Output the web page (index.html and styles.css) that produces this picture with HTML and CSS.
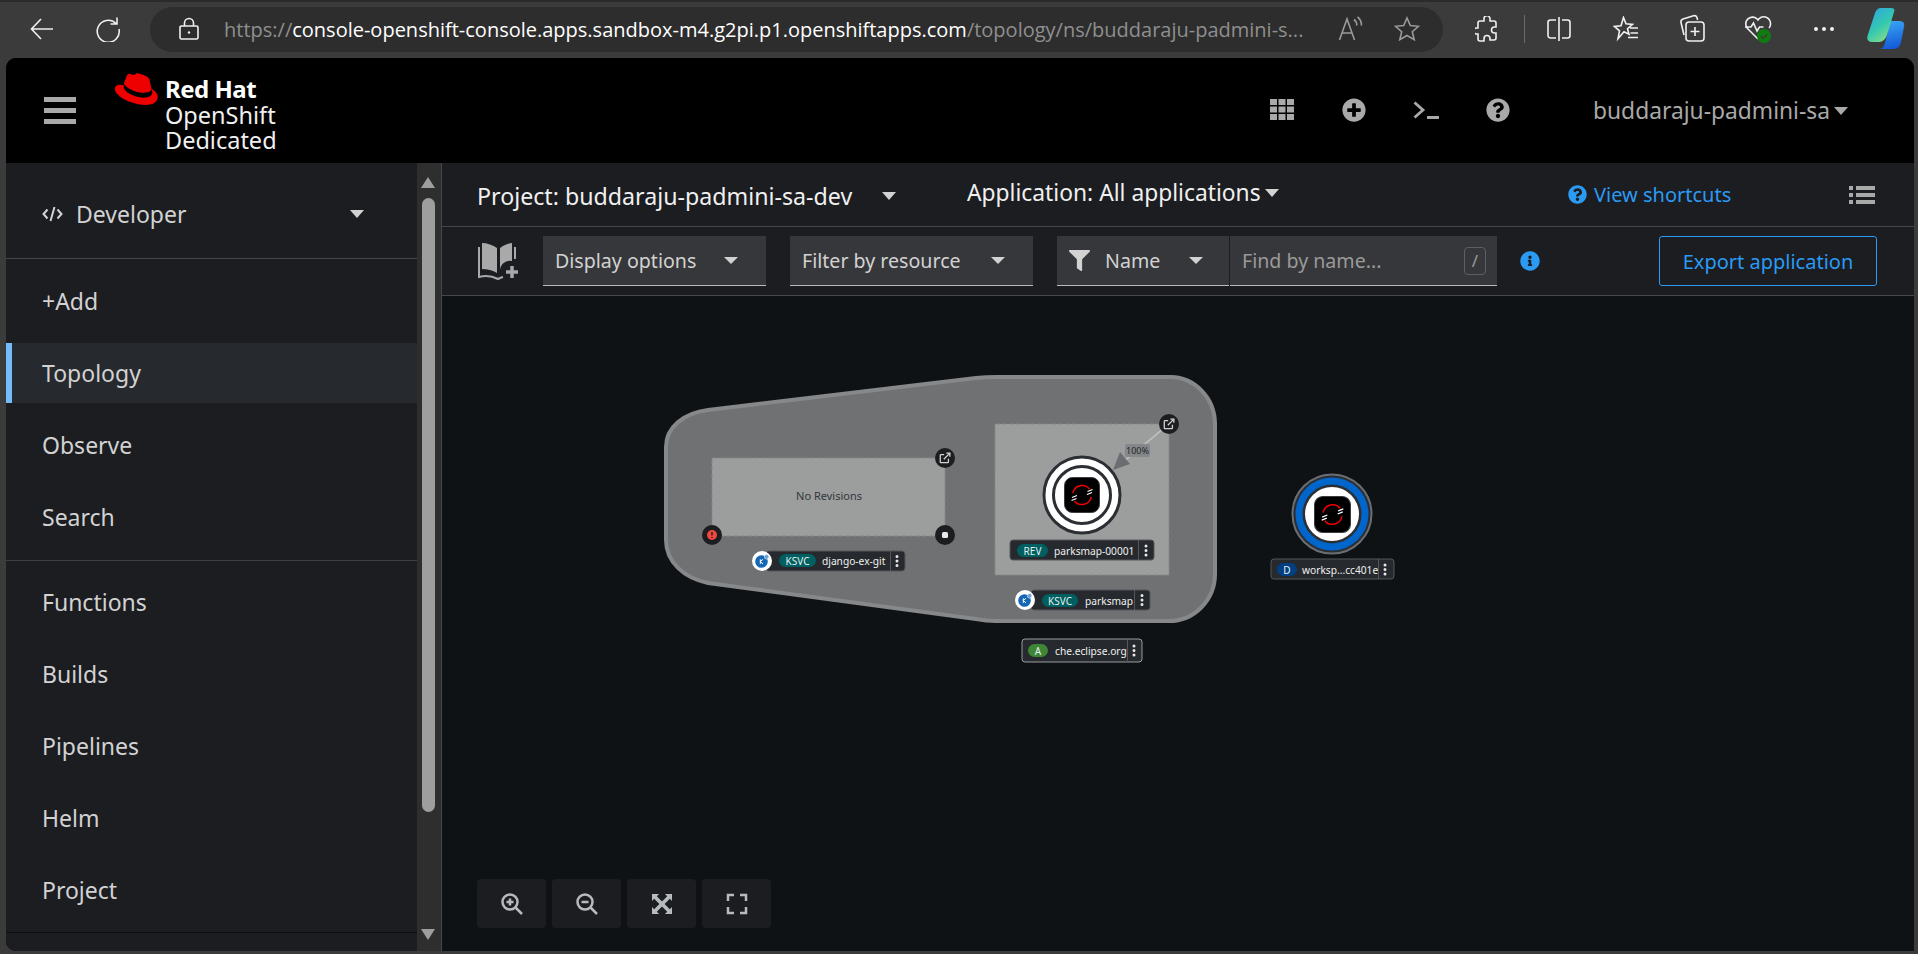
FILE: index.html
```html
<!DOCTYPE html>
<html lang="en">
<head>
  <meta charset="UTF-8">
  <title>Topology - Red Hat OpenShift Dedicated</title>
  <link rel="stylesheet" href="styles.css">
</head>
<body>

  <svg class="defs" width="0" height="0">
    <defs>
      <symbol id="i-question" viewBox="0 0 512 512"><path d="M504 256c0 136.997-111.043 248-248 248S8 392.997 8 256C8 119.083 119.043 8 256 8s248 111.083 248 248zM262.655 90c-54.497 0-89.255 22.957-116.549 63.758-3.536 5.286-2.353 12.415 2.715 16.258l34.699 26.31c5.205 3.947 12.621 3.008 16.665-2.122 17.864-22.658 30.113-35.797 57.303-35.797 20.429 0 45.698 13.148 45.698 32.958 0 14.976-12.363 22.667-32.534 33.976C247.128 238.528 216 254.941 216 296v4c0 6.627 5.373 12 12 12h56c6.627 0 12-5.373 12-12v-1.333c0-28.462 83.186-29.647 83.186-106.667 0-58.002-60.165-102-116.531-102zM256 338c-25.365 0-46 20.635-46 46 0 25.364 20.635 46 46 46s46-20.636 46-46c0-25.365-20.635-46-46-46z"/></symbol>
      <symbol id="i-info" viewBox="0 0 512 512"><path d="M256 8C119.043 8 8 119.083 8 256c0 136.997 111.043 248 248 248s248-111.003 248-248C504 119.083 392.957 8 256 8zm0 110c23.196 0 42 18.804 42 42s-18.804 42-42 42-42-18.804-42-42 18.804-42 42-42zm56 254c0 6.627-5.373 12-12 12h-88c-6.627 0-12-5.373-12-12v-24c0-6.627 5.373-12 12-12h12v-64h-12c-6.627 0-12-5.373-12-12v-24c0-6.627 5.373-12 12-12h64c6.627 0 12 5.373 12 12v100h12c6.627 0 12 5.373 12 12v24z"/></symbol>
      <symbol id="i-plus" viewBox="0 0 512 512"><path d="M256 8C119 8 8 119 8 256s111 248 248 248 248-111 248-248S393 8 256 8zm144 276c0 6.6-5.4 12-12 12h-92v92c0 6.6-5.4 12-12 12h-56c-6.6 0-12-5.4-12-12v-92h-92c-6.6 0-12-5.4-12-12v-56c0-6.6 5.4-12 12-12h92v-92c0-6.6 5.4-12 12-12h56c6.6 0 12 5.4 12 12v92h92c6.6 0 12 5.4 12 12v56z"/></symbol>
      <symbol id="i-filter" viewBox="0 0 512 512"><path d="M487.976 0H24.028C2.71 0-8.047 25.866 7.058 40.971L192 225.941V432c0 7.831 3.821 15.17 10.237 19.662l80 55.98C298.02 518.69 320 507.493 320 487.98V225.941l184.947-184.97C520.021 25.896 509.338 0 487.976 0z"/></symbol>
      <symbol id="i-ext" viewBox="0 0 14 14"><path class="ext-line" d="M11 8v3.600a.9.9 0 0 1-.9.9H2.400a.9.9 0 0 1-.9-.9V3.900a.9.9 0 0 1 .9-.9H6M5.600 8.400 12.400 1.600M8.600 1.300h4.100v4.100"/></symbol>
      <symbol id="i-os" viewBox="0 0 36 36">
        <rect class="os-box" x="0.500" y="0.500" width="35" height="35" rx="8"/>
        <path class="os-arc" d="M8.800 16.200A9.500 9.500 0 0 1 25.500 12M27.200 19.800A9.500 9.500 0 0 1 10.500 24"/>
        <path class="os-dash" d="M8 20.500l5-2M7.500 23.500l5-2M23.500 14.500l5-2M23 17.500l5-2"/>
      </symbol>
      <symbol id="i-kn" viewBox="0 0 20 20">
        <circle class="kn-bg" cx="10" cy="10" r="10"/>
        <circle class="kn-blue" cx="9.500" cy="10.500" r="6.300"/>
        <circle class="kn-small" cx="14.600" cy="5.800" r="2.300"/>
        <path class="kn-k" d="M8.300 8.300v4.600M11 8.300l-2.700 2.200 2.700 2.400"/>
      </symbol>
    </defs>
  </svg>

  <div class="browser-bar">
    <svg class="nav-back" width="24" height="24" viewBox="0 0 24 24"><path class="chrome-line" d="M23 12H1.500M11 2 1.500 12 11 22"/></svg>
    <svg class="nav-reload" width="26" height="26" viewBox="0 0 26 26"><path class="chrome-line" d="M21 7.500A11 11 0 1 0 24 13M22 1.500v6.500h-6.500"/></svg>
    <div class="address-pill">
      <svg class="lock" width="20" height="24" viewBox="0 0 20 24"><path class="chrome-line" d="M2.500 9h15a1.500 1.500 0 0 1 1.500 1.500v10a1.500 1.500 0 0 1-1.500 1.500h-15A1.500 1.500 0 0 1 1 20.500v-10A1.500 1.500 0 0 1 2.500 9zM5.500 9V6a4.500 4.500 0 0 1 9 0v3"/><circle class="chrome-dot" cx="10" cy="15.500" r="1.200"/></svg>
      <div class="url"><span class="url-dim">https://</span>console-openshift-console.apps.sandbox-m4.g2pi.p1.openshiftapps.com<span class="url-dim">/topology/ns/buddaraju-padmini-s...</span></div>
      <svg class="read-aloud" width="26" height="26" viewBox="0 0 26 26"><path class="chrome-dim" d="M1.500 24 9 3l7.500 21M4 17h10M16 3.500c2 1.500 2.800 3.500 2.800 6M19.500 1c3 2.200 4 5 4 8.500"/></svg>
      <svg class="pill-star" width="26" height="26" viewBox="0 0 26 26"><path class="chrome-dim" d="M13 2l3.300 7.500 8.200.8-6.200 5.400 1.900 8L13 19.500l-7.200 4.200 1.900-8-6.200-5.400 8.200-.8z"/></svg>
    </div>
    <div class="tool-cell tool-ext">
      <svg width="24" height="26" viewBox="0 0 24 26"><path class="chrome-line" d="M9 2.500a3 3 0 0 1 6 .6V5h4a2 2 0 0 1 2 2v4h-1.500a3 3 0 0 0 0 6H21v5a2 2 0 0 1-2 2h-4v-1.500a3 3 0 0 0-6 0V25H5a2 2 0 0 1-2-2v-5H1.500a3 3 0 0 1 0-6H3V7a2 2 0 0 1 2-2h4z"/></svg>
    </div>
    <div class="tool-sep"></div>
    <div class="tool-cell tool-split">
      <svg width="24" height="26" viewBox="0 0 24 26"><path class="chrome-line" d="M9 4H3.500A2.500 2.500 0 0 0 1 6.500v13A2.500 2.500 0 0 0 3.500 22H9M15 4h5.500A2.500 2.500 0 0 1 23 6.500v13a2.500 2.500 0 0 1-2.500 2.500H15M12 1v24"/></svg>
    </div>
    <div class="tool-cell">
      <svg width="26" height="26" viewBox="0 0 26 26"><path class="chrome-line" d="M10.500 1.500l2.500 6.300 6.500.6-5 4.300 1.500 5.500-5-2.500-6 7 1.500-7.800-5-4.500 6.500-.6zM17 12h8M17.500 17h7.500M15 21.500h10"/></svg>
    </div>
    <div class="tool-cell">
      <svg width="26" height="30" viewBox="0 0 26 30"><path class="chrome-line" d="M5 21 2 8.500a3 3 0 0 1 2-3.500L14.500 1.800a3 3 0 0 1 3.500 1.700l.6 2.500M10 8h12a3 3 0 0 1 3 3v13a3 3 0 0 1-3 3H10a3 3 0 0 1-3-3V11a3 3 0 0 1 3-3zM16 13v9M11.500 17.500h9"/></svg>
    </div>
    <div class="tool-cell">
      <svg width="28" height="30" viewBox="0 0 28 30">
        <path class="chrome-line" d="M14 25 3.500 14.500A6.800 6.800 0 0 1 13 4.800L14 6l1-1.200a6.800 6.800 0 0 1 10 9.200M1 13h6l2.500-4 3.500 8 2.500-4h4"/>
        <circle class="health-ok" cx="20" cy="22" r="7"/>
        <path class="health-check" d="M17 22l2.200 2.200 4-4"/>
      </svg>
    </div>
    <div class="tool-cell">
      <svg width="22" height="6" viewBox="0 0 22 6"><circle class="chrome-dot" cx="3" cy="3" r="2"/><circle class="chrome-dot" cx="11" cy="3" r="2"/><circle class="chrome-dot" cx="19" cy="3" r="2"/></svg>
    </div>
    <div class="tool-cell tool-copilot">
      <svg width="38" height="42" viewBox="0 0 38 42">
        <defs>
          <linearGradient id="cp-a" x1="0" y1="0" x2="0.6" y2="1"><stop offset="0" stop-color="#2aa3e8"/><stop offset="0.6" stop-color="#35c8b0"/><stop offset="1" stop-color="#7fdc8c"/></linearGradient>
          <linearGradient id="cp-b" x1="0.4" y1="0" x2="0.6" y2="1"><stop offset="0" stop-color="#39a5f2"/><stop offset="1" stop-color="#1357d8"/></linearGradient>
        </defs>
        <path fill="url(#cp-b)" d="M17 13h15c4 0 6 2 5 6l-3 15c-1 5-4 7-8 7H12c3 0 5-2 6-6l3-12c.7-3-1-5-4-5z"/>
        <path fill="url(#cp-a)" d="M14 0h10c3 0 4 1.500 3 4L20 27c-1.500 4-4 7-8 7H5c-4 0-5.500-3-4.500-6L8 5c1-3 3-5 6-5z"/>
      </svg>
    </div>
  </div>

  <div class="app">
    <header class="masthead">
      <div class="hamburger"><span></span><span></span><span></span></div>
      <svg class="rh-hat" width="45" height="34" viewBox="0 -2 50 37"><path d="M33.600 20.500c3.300 0 8-.7 8-4.600a3.800 3.800 0 0 0-.1-.9l-2-8.600c-.5-1.900-.9-2.800-4.200-4.400C32.800.7 27.200-1 25.500-1c-1.500 0-2 2-3.800 2-1.700 0-3-1.400-4.600-1.400-1.600 0-2.600 1-3.400 3.200 0 0-2.200 6.200-2.500 7.200a1.700 1.700 0 0 0-.1.500c0 2.400 9.600 10.400 22.500 10.400m8.600-3c.4 2.100.4 2.300.4 2.600 0 3.600-4 5.600-9.300 5.600-12 0-22.500-7-22.500-11.700a4.700 4.700 0 0 1 .4-1.900C6.400 11 1 11.800 1 16.600 1 24.500 19.600 34.200 34.400 34.200c11.300 0 14.200-5.100 14.200-9.200 0-3.200-2.800-6.800-7.800-9"/></svg>
      <div class="brand"><b class="brand-rh">Red Hat</b><br>OpenShift<br>Dedicated</div>
      <div class="head-tools">
        <div class="head-icon">
          <svg width="24" height="21" viewBox="0 0 24 21"><path d="M0 0h7v6H0zM8.500 0h7v6h-7zM17 0h7v6h-7zM0 7.500h7v6H0zM8.500 7.500h7v6h-7zM17 7.500h7v6h-7zM0 15h7v6H0zM8.500 15h7v6h-7zM17 15h7v6h-7z"/></svg>
        </div>
        <div class="head-icon"><svg width="24" height="24"><use href="#i-plus"/></svg></div>
        <div class="head-icon">
          <svg width="26" height="20" viewBox="0 0 26 20"><path class="term-line" d="M1.500 2.500 10 10l-8.500 7.500M14 17.500h12"/></svg>
        </div>
        <div class="head-icon"><svg width="24" height="24"><use href="#i-question"/></svg></div>
      </div>
      <div class="user-menu">buddaraju-padmini-sa<span class="caret caret-user"></span></div>
    </header>

    <div class="workspace">
      <aside class="sidebar">
        <div class="perspective">
          <svg class="code-icon" width="21" height="16" viewBox="0 0 21 16"><path class="code-line" d="M5.500 3.500 1.500 8l4 4.500M15.500 3.500l4 4.500-4 4.500M12.500 1 8.500 15"/></svg>
          <span class="perspective-name">Developer</span>
          <span class="caret caret-side"></span>
        </div>
        <nav class="nav-group nav-first">
          <a class="nav-item">+Add</a>
          <a class="nav-item active">Topology</a>
          <a class="nav-item">Observe</a>
          <a class="nav-item">Search</a>
        </nav>
        <nav class="nav-group nav-second">
          <a class="nav-item">Functions</a>
          <a class="nav-item">Builds</a>
          <a class="nav-item">Pipelines</a>
          <a class="nav-item">Helm</a>
          <a class="nav-item">Project</a>
        </nav>
      </aside>
      <div class="side-scroll">
        <span class="scroll-up"></span>
        <span class="scroll-thumb"></span>
        <span class="scroll-down"></span>
      </div>

      <main class="main">
        <div class="project-bar">
          <div class="project-select">Project: buddaraju-padmini-sa-dev<span class="caret caret-project"></span></div>
          <div class="app-select">Application: All applications<span class="caret caret-app"></span></div>
          <a class="shortcuts"><svg width="19" height="19"><use href="#i-question"/></svg>View shortcuts</a>
          <svg class="list-icon" width="26" height="20" viewBox="0 0 26 20"><path d="M0 1h4v4H0zM7 1h19v4H7zM0 8h4v4H0zM7 8h19v4H7zM0 15h4v4H0zM7 15h19v4H7z"/></svg>
        </div>

        <div class="toolbar">
          <svg class="book-icon" width="42" height="38" viewBox="0 0 42 38">
            <path d="M5 1c5 0 11 2 15 5v25c-4-2.500-10-4-15-4zM23 6c4-3 8-5 12-5v18a10 10 0 0 0-12 9z"/>
            <path class="book-edge" d="M2 5v30c6-1.500 13-1 19 2 2-1 3-1.500 5-2M38 5v12"/>
            <path class="book-plus" d="M35 24v12M29 30h12"/>
          </svg>
          <div class="select select-display">Display options<span class="caret caret-sel"></span></div>
          <div class="select select-filter">Filter by resource<span class="caret caret-sel"></span></div>
          <div class="select select-name"><svg class="filter-icon" width="21" height="21"><use href="#i-filter"/></svg>Name<span class="caret caret-sel caret-end"></span></div>
          <div class="find-box">
            <span class="find-text">Find by name...</span>
            <span class="slash-key">/</span>
          </div>
          <svg class="find-info" width="20" height="20"><use href="#i-info"/></svg>
          <button class="export-btn">Export application</button>
        </div>

        <div class="canvas">
          <svg class="diagram" width="1473" height="655" viewBox="441 296 1473 655">
            <path class="group-shape" d="M665 447C665 427 683 413 707 410L975 378Q985 377 995 377H1170A45 47 0 0 1 1214 423V574A46 47 0 0 1 1168 621H995Q985 621 975 619L707 583C683 578 665 562 665 540Z"/>

            <rect class="rev-box" x="711" y="458" width="233" height="78"/>
            <text class="rev-empty" x="828" y="500" text-anchor="middle">No Revisions</text>

            <rect class="rev-box" x="994" y="424" width="174" height="151"/>

            <line class="traffic-line" x1="1168" y1="424" x2="1122" y2="462"/>
            <path class="traffic-head" d="M1112 470 1119 452 1129 464Z"/>
            <rect class="traffic-tag" x="1124" y="444" width="25" height="13" rx="2"/>
            <text class="traffic-text" x="1136.500" y="454" text-anchor="middle">100%</text>

            <circle class="ring-dark" cx="1081" cy="495" r="38"/>
            <circle class="ring-white" cx="1081" cy="495" r="28.500"/>
            <use href="#i-os" x="1063" y="477" width="36" height="36"/>

            <circle class="ring-grey" cx="1331" cy="514" r="39.500"/>
            <circle class="ring-blue" cx="1331" cy="514" r="33"/>
            <circle class="ring-inner" cx="1331" cy="514" r="27"/>
            <use href="#i-os" x="1313" y="496" width="37" height="37"/>

            <!-- decorators -->
            <circle class="deco" cx="944" cy="458" r="10"/>
            <use class="ext-use" href="#i-ext" x="938" y="452" width="12" height="12"/>
            <circle class="deco" cx="944" cy="535" r="10"/>
            <rect class="deco-stop" x="941" y="532" width="6" height="6" rx="1.500"/>
            <circle class="deco" cx="711" cy="535" r="10"/>
            <circle class="deco-red" cx="711" cy="535" r="5"/>
            <path class="deco-bang" d="M711 532v3.500M711 537v1"/>
            <circle class="deco" cx="1168" cy="424" r="10"/>
            <use class="ext-use" href="#i-ext" x="1162" y="418" width="12" height="12"/>

            <!-- labels -->
            <rect class="label-box" x="765" y="551" width="139" height="20" rx="3"/>
            <rect class="badge badge-k" x="778" y="554" width="37" height="13" rx="6.500"/>
            <text class="badge-text" x="796.500" y="564.500" text-anchor="middle">KSVC</text>
            <text class="label-text" x="821" y="565">django-ex-git</text>
            <line class="label-div" x1="889.500" y1="551" x2="889.500" y2="571"/>
            <path class="kebab" d="M896 556.500v.1M896 561v.1M896 565.500v.1"/>
            <use href="#i-kn" x="751" y="551" width="20" height="20"/>

            <rect class="label-box" x="1009" y="540" width="144" height="20" rx="3"/>
            <rect class="badge badge-k" x="1016" y="544" width="31" height="13" rx="6.500"/>
            <text class="badge-text" x="1031.500" y="554.500" text-anchor="middle">REV</text>
            <text class="label-text" x="1053" y="555">parksmap-00001</text>
            <line class="label-div" x1="1137.500" y1="540" x2="1137.500" y2="560"/>
            <path class="kebab" d="M1145 546v.1M1145 550.500v.1M1145 555v.1"/>

            <rect class="label-box" x="1030" y="590" width="119" height="20" rx="3"/>
            <rect class="badge badge-k" x="1041" y="594" width="36" height="13" rx="6.500"/>
            <text class="badge-text" x="1059" y="604.500" text-anchor="middle">KSVC</text>
            <text class="label-text" x="1084" y="605">parksmap</text>
            <line class="label-div" x1="1133.500" y1="590" x2="1133.500" y2="610"/>
            <path class="kebab" d="M1141 595.500v.1M1141 600v.1M1141 604.500v.1"/>
            <use href="#i-kn" x="1014" y="590" width="20" height="20"/>

            <rect class="label-box label-light" x="1021" y="639" width="120" height="23" rx="3"/>
            <rect class="badge badge-a" x="1027" y="644" width="20" height="13" rx="6.500"/>
            <text class="badge-text" x="1037" y="654.500" text-anchor="middle">A</text>
            <text class="label-text" x="1054" y="655">che.eclipse.org</text>
            <line class="label-div" x1="1126.500" y1="639" x2="1126.500" y2="662"/>
            <path class="kebab" d="M1133 646v.1M1133 650.500v.1M1133 655v.1"/>

            <rect class="label-box" x="1270" y="559" width="123" height="20" rx="3"/>
            <rect class="badge badge-d" x="1276" y="563" width="20" height="13" rx="6.500"/>
            <text class="badge-text" x="1286" y="573.500" text-anchor="middle">D</text>
            <text class="label-text" x="1301" y="574">worksp...cc401e</text>
            <line class="label-div" x1="1377.500" y1="559" x2="1377.500" y2="579"/>
            <path class="kebab" d="M1384 565v.1M1384 569.500v.1M1384 574v.1"/>
          </svg>

          <div class="zoom-controls">
            <button class="zoom-btn">
              <svg width="24" height="24" viewBox="0 0 24 24"><circle class="zoom-line" cx="10" cy="10" r="7.500"/><path class="zoom-line" d="M15.500 15.500 22 22M10 6.500v7M6.500 10h7"/></svg>
            </button>
            <button class="zoom-btn">
              <svg width="24" height="24" viewBox="0 0 24 24"><circle class="zoom-line" cx="10" cy="10" r="7.500"/><path class="zoom-line" d="M15.500 15.500 22 22M6.500 10h7"/></svg>
            </button>
            <button class="zoom-btn">
              <svg width="22" height="22" viewBox="0 0 22 22"><path class="zoom-fill" d="M1 1h7L5.800 3.200 11 8.400l5.200-5.200L14 1h7v7l-2.200-2.200L13.600 11l5.200 5.200L21 14v7h-7l2.200-2.200L11 13.600l-5.200 5.200L8 21H1v-7l2.200 2.200L8.400 11 3.200 5.800 1 8z"/></svg>
            </button>
            <button class="zoom-btn">
              <svg width="22" height="22" viewBox="0 0 22 22"><path class="zoom-line" d="M2 8V2h6M14 2h6v6M20 14v6h-6M8 20H2v-6"/></svg>
            </button>
          </div>
        </div>
      </main>
    </div>
  </div>

</body>
</html>
```

FILE: styles.css
```css
html, body {
  margin: 0;
  height: 954px;
  overflow: hidden;
}

body {
  background-color: #3b3b3b;
  font-family: 'Noto Sans', sans-serif;
  color: #d2d2d2;
}

.defs {
  position: absolute;
}

/* browser chrome */
.browser-bar {
  display: flex;
  align-items: center;
  height: 58px;
  box-sizing: border-box;
  padding-bottom: 2px;
  border-top: 2px solid #2b2b2b;
}

.chrome-line {
  fill: none;
  stroke: #f0f0f0;
  stroke-width: 1.6;
}

.chrome-dim {
  fill: none;
  stroke: #9a9a9a;
  stroke-width: 1.6;
}

.chrome-dot {
  fill: #f0f0f0;
}

.nav-back {
  margin-left: 30px;
}

.nav-reload {
  margin-left: 41px;
}

.address-pill {
  display: flex;
  align-items: center;
  width: 1293px;
  height: 45px;
  margin-left: 29px;
  border-radius: 23px;
  background-color: #2d2d2d;
}

.lock {
  margin-left: 29px;
}

.url {
  width: 1092px;
  margin-left: 25px;
  font-family: 'Open Sans', sans-serif;
  font-size: 20px;
  white-space: nowrap;
  color: #fff;
}

.url-dim {
  color: #8f8f8f;
}

.read-aloud {
  margin-left: 22px;
}

.pill-star {
  margin-left: 30px;
}

.tool-cell {
  display: flex;
  align-items: center;
  justify-content: center;
  width: 66px;
}

.tool-ext {
  margin-left: 11px;
}

.tool-sep {
  width: 1px;
  height: 28px;
  margin-left: 4px;
  background-color: #6a6a6a;
}

.tool-split {
  width: 68px;
}

.tool-copilot {
  width: 58px;
}

.health-ok {
  fill: #107c10;
}

.health-check {
  fill: none;
  stroke: #3b3b3b;
  stroke-width: 1.6;
}

/* app frame */
.app {
  display: flex;
  flex-direction: column;
  height: 893px;
  margin: 0 4px 0 6px;
  border-radius: 10px 10px 0 10px;
  overflow: hidden;
  background-color: #000;
}

.masthead {
  display: flex;
  align-items: center;
  flex: none;
  height: 105px;
  background-color: #000;
}

.hamburger {
  display: flex;
  flex-direction: column;
  gap: 6px;
  margin-left: 38px;
}

.hamburger span {
  display: block;
  width: 32px;
  height: 5px;
  background-color: #a9a9a9;
}

.rh-hat {
  align-self: flex-start;
  margin: 14px 0 0 38px;
  fill: #e00;
}

.brand {
  width: 125px;
  margin-left: 6px;
  padding-top: 9px;
  font-size: 23.500px;
  line-height: 25.500px;
  color: #f0f0f0;
}

.brand-rh {
  font-size: 24px;
  letter-spacing: -0.5px;
  color: #fff;
}

.head-tools {
  display: flex;
  margin-left: 956px;
  padding-bottom: 2px;
}

.head-icon {
  display: flex;
  align-items: center;
  justify-content: center;
  width: 72px;
  fill: #a9a9a9;
}

.term-line {
  fill: none;
  stroke: #a9a9a9;
  stroke-width: 2.800;
}

.user-menu {
  display: flex;
  align-items: center;
  margin-left: 59px;
  font-size: 22.800px;
  color: #a9a9a9;
}

.caret {
  display: inline-block;
  width: 0;
  height: 0;
  border-style: solid;
  border-width: 8px 7px 0;
  border-color: #d2d2d2 transparent transparent;
}

.caret-user {
  margin-left: 4px;
  border-top-color: #a9a9a9;
}

/* sidebar */
.workspace {
  display: flex;
  flex: 1;
  min-height: 0;
}

.sidebar {
  flex: none;
  width: 411px;
  background-color: #1b1d21;
  font-size: 23px;
}

.perspective {
  display: flex;
  align-items: center;
  box-sizing: border-box;
  height: 96px;
  padding: 7px 0 0 36px;
  border-bottom: 1px solid #45474a;
}

.code-line {
  fill: none;
  stroke: #d2d2d2;
  stroke-width: 2;
}

.perspective-name {
  margin-left: 13px;
}

.caret-side {
  margin-left: 164px;
}

.nav-group {
  display: flex;
  flex-direction: column;
  gap: 12px;
}

.nav-first {
  padding-top: 12px;
  padding-bottom: 13px;
  border-bottom: 1px solid #3c3f42;
}

.nav-second {
  padding-top: 11px;
  padding-bottom: 12px;
  border-bottom: 1px solid #0e0f11;
}

.nav-item {
  display: flex;
  align-items: center;
  height: 60px;
  padding-left: 36px;
}

.nav-item.active {
  padding-left: 30px;
  border-left: 6px solid #73bcf7;
  background-color: #26292d;
}

.side-scroll {
  position: relative;
  flex: none;
  width: 24px;
  border-right: 1px solid #45474a;
  background-color: #2e2e2e;
}

.scroll-up,
.scroll-down {
  position: absolute;
  left: 4px;
  width: 0;
  height: 0;
  border-style: solid;
}

.scroll-up {
  top: 14px;
  border-width: 0 7.500px 11px;
  border-color: transparent transparent #9e9e9e;
}

.scroll-down {
  bottom: 11px;
  border-width: 11px 7.500px 0;
  border-color: #9e9e9e transparent transparent;
}

.scroll-thumb {
  position: absolute;
  top: 35px;
  left: 5px;
  width: 13px;
  height: 614px;
  border-radius: 7px;
  background-color: #9e9e9e;
}

/* main area */
.main {
  display: flex;
  flex-direction: column;
  flex: 1;
  min-width: 0;
  background-color: #1b1d21;
}

.project-bar {
  display: flex;
  align-items: center;
  flex: none;
  height: 63px;
  padding-left: 35px;
  border-bottom: 1px solid #45474a;
  font-size: 23px;
  color: #f0f0f0;
}

.project-select {
  display: flex;
  align-items: center;
  width: 490px;
  padding-top: 2px;
  font-size: 23.200px;
}

.caret-project {
  margin-left: 30px;
}

.app-select {
  display: flex;
  align-items: center;
  width: 601px;
  padding-bottom: 4px;
  font-size: 22.800px;
}

.caret-app {
  margin-left: 4px;
}

.shortcuts {
  display: flex;
  align-items: center;
  gap: 7px;
  width: 281px;
  font-size: 20px;
  fill: #2b9af3;
  color: #2b9af3;
}

.list-icon {
  fill: #a9a9a9;
}

.toolbar {
  display: flex;
  align-items: center;
  flex: none;
  height: 68px;
  padding-left: 35px;
  border-bottom: 1px solid #45474a;
  font-size: 19.600px;
}

.book-icon {
  fill: #a9a9a9;
}

.book-edge {
  fill: none;
  stroke: #a9a9a9;
  stroke-width: 2;
}

.book-plus {
  fill: none;
  stroke: #a9a9a9;
  stroke-width: 3.500;
}

.select,
.find-box {
  display: flex;
  align-items: center;
  box-sizing: border-box;
  height: 50px;
  background-color: #36373b;
  border-bottom: 1px solid #b8bbbe;
}

.select {
  justify-content: space-between;
  padding: 0 28px 0 12px;
}

.caret-sel {
  border-width: 7px 7px 0;
}

.select-display {
  width: 223px;
  margin-left: 24px;
}

.select-filter {
  width: 243px;
  margin-left: 24px;
}

.select-name {
  justify-content: flex-start;
  gap: 15px;
  width: 172px;
  margin-left: 24px;
  margin-right: 1px;
  padding-right: 26px;
}

.caret-end {
  margin-left: auto;
}

.filter-icon {
  fill: #d2d2d2;
}

.find-box {
  justify-content: space-between;
  width: 267px;
  padding: 0 11px 0 12px;
  color: #9a9a9a;
}

.slash-key {
  box-sizing: border-box;
  width: 22px;
  height: 28px;
  border: 1px solid #5d5f63;
  border-radius: 4px;
  font-size: 17px;
  line-height: 25px;
  text-align: center;
}

.find-info {
  margin-left: 23px;
  fill: #2b9af3;
}

.export-btn {
  width: 218px;
  height: 50px;
  margin-left: 119px;
  border: 1px solid #2b9af3;
  border-radius: 3px;
  background: none;
  font-family: inherit;
  font-size: 20px;
  color: #2b9af3;
}

/* topology canvas */
.canvas {
  position: relative;
  flex: 1;
  background-color: #0f1214;
}

.diagram {
  position: absolute;
  top: 0;
  left: 0;
}

.group-shape {
  fill: #707173;
  stroke: #86888a;
  stroke-width: 4;
}

.rev-box {
  fill: #9c9e9e;
  stroke: #85878a;
  stroke-width: 1;
  stroke-dasharray: 5 2;
}

.rev-empty {
  font-size: 11px;
  fill: #33363b;
}

.traffic-line {
  stroke: #c2c4c6;
  stroke-width: 1.500;
}

.traffic-head {
  fill: #6a6e73;
}

.traffic-tag {
  fill: #85878a;
}

.traffic-text {
  font-size: 9px;
  fill: #25272b;
}

.ring-dark {
  fill: #fff;
  stroke: #2b2e33;
  stroke-width: 3;
}

.ring-white {
  fill: #fff;
  stroke: #2b2e33;
  stroke-width: 3;
}

.ring-grey {
  fill: #2b2e33;
  stroke: #6a6e73;
  stroke-width: 2;
}

.ring-blue {
  fill: none;
  stroke: #0066cc;
  stroke-width: 7;
}

.ring-inner {
  fill: #fff;
}

.os-box {
  fill: #000;
  stroke: #3a3c40;
  stroke-width: 1;
}

.os-arc {
  fill: none;
  stroke: #e00;
  stroke-width: 1.500;
}

.os-dash {
  fill: none;
  stroke: #fff;
  stroke-width: 1.200;
}

.kn-bg {
  fill: #fff;
}

.kn-blue {
  fill: #1567b5;
}

.kn-small {
  fill: #6d9ed6;
  stroke: #fff;
  stroke-width: 0.500;
}

.kn-k {
  fill: none;
  stroke: #fff;
  stroke-width: 1;
}

.deco {
  fill: #1b1d21;
}

.deco-red {
  fill: #f0483e;
}

.deco-bang {
  fill: none;
  stroke: #1b1d21;
  stroke-width: 1.400;
}

.deco-stop {
  fill: #e8e8e8;
}

.ext-line {
  fill: none;
  stroke: #d2d2d2;
  stroke-width: 1.500;
}

.label-box {
  fill: #26292d;
  stroke: #54565a;
  stroke-width: 1;
}

.label-light {
  stroke: #9a9c9e;
}

.label-div {
  stroke: #54565a;
  stroke-width: 1;
}

.label-text {
  font-size: 10.200px;
  fill: #f0f0f0;
}

.badge-k {
  fill: #005f60;
}

.badge-a {
  fill: #3e8635;
}

.badge-d {
  fill: #004080;
}

.badge-text {
  font-size: 10px;
  fill: #e6f0f0;
}

.kebab {
  fill: none;
  stroke: #e8e8e8;
  stroke-width: 3;
  stroke-linecap: round;
}

.zoom-controls {
  position: absolute;
  left: 35px;
  bottom: 23px;
  display: flex;
  gap: 6px;
}

.zoom-btn {
  display: flex;
  align-items: center;
  justify-content: center;
  width: 69px;
  height: 49px;
  padding: 0;
  border: none;
  border-radius: 4px;
  background-color: #1b1d21;
}

.zoom-line {
  fill: none;
  stroke: #b8bbbe;
  stroke-width: 2.500;
}

.zoom-fill {
  fill: #b8bbbe;
}
```
